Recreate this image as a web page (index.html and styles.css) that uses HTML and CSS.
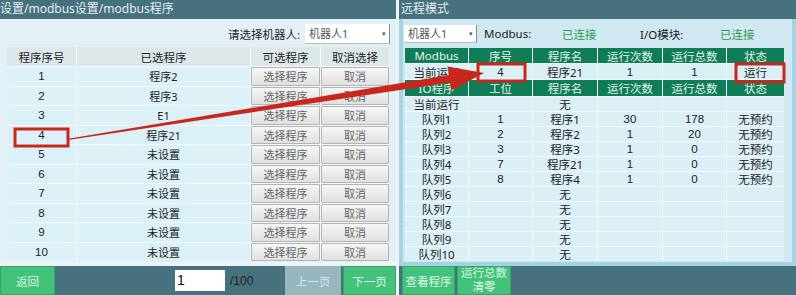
FILE: index.html
```html
<!DOCTYPE html>
<html lang="zh">
<head>
<meta charset="utf-8">
<link rel="stylesheet" href="styles.css">
</head>
<body>
<div class="screen">
  <section class="panel left">
    <div class="title">设置/modbus设置/modbus程序</div>
    <div class="lbody">
      <div class="robot-row">
        <span class="label">请选择机器人:</span>
        <div class="select wide"><span>机器人1</span><span class="caret">▾</span></div>
      </div>
      <div class="ltable">
        <div class="lh">程序序号</div><div class="lh">已选程序</div><div class="lh">可选程序</div><div class="lh">取消选择</div>
        <div class="lc num">1</div><div class="lc">程序2</div><div class="lb"><button>选择程序</button></div><div class="lb"><button>取消</button></div>
        <div class="lc num">2</div><div class="lc">程序3</div><div class="lb"><button>选择程序</button></div><div class="lb"><button>取消</button></div>
        <div class="lc num">3</div><div class="lc">E1</div><div class="lb"><button>选择程序</button></div><div class="lb"><button>取消</button></div>
        <div class="lc num">4</div><div class="lc">程序21</div><div class="lb"><button>选择程序</button></div><div class="lb"><button>取消</button></div>
        <div class="lc num">5</div><div class="lc">未设置</div><div class="lb"><button>选择程序</button></div><div class="lb"><button>取消</button></div>
        <div class="lc num">6</div><div class="lc">未设置</div><div class="lb"><button>选择程序</button></div><div class="lb"><button>取消</button></div>
        <div class="lc num">7</div><div class="lc">未设置</div><div class="lb"><button>选择程序</button></div><div class="lb"><button>取消</button></div>
        <div class="lc num">8</div><div class="lc">未设置</div><div class="lb"><button>选择程序</button></div><div class="lb"><button>取消</button></div>
        <div class="lc num">9</div><div class="lc">未设置</div><div class="lb"><button>选择程序</button></div><div class="lb"><button>取消</button></div>
        <div class="lc num">10</div><div class="lc">未设置</div><div class="lb"><button>选择程序</button></div><div class="lb"><button>取消</button></div>
      </div>
    </div>
    <div class="footer">
      <div class="btn green back">返回</div>
      <div class="page-input">1</div>
      <span class="total">/100</span>
      <div class="btn grey prev">上一页</div>
      <div class="btn green next">下一页</div>
    </div>
  </section>

  <section class="panel right">
    <div class="title">远程模式</div>
    <div class="rbody">
      <div class="status-row">
        <div class="select narrow"><span>机器人1</span><span class="caret">▾</span></div>
        <span class="st-label mod">Modbus:</span>
        <span class="ok ok1">已连接</span>
        <span class="st-label io">I/O模块:</span>
        <span class="ok">已连接</span>
      </div>
      <div class="rtable">
        <div class="rh">Modbus</div><div class="rh">序号</div><div class="rh">程序名</div><div class="rh">运行次数</div><div class="rh">运行总数</div><div class="rh">状态</div>
        <div class="rc">当前运行</div><div class="rc num">4</div><div class="rc">程序21</div><div class="rc num">1</div><div class="rc num">1</div><div class="rc">运行</div>
        <div class="rh">IO程序</div><div class="rh">工位</div><div class="rh">程序名</div><div class="rh">运行次数</div><div class="rh">运行总数</div><div class="rh">状态</div>
        <div class="rc">当前运行</div><div class="rc"></div><div class="rc">无</div><div class="rc"></div><div class="rc"></div><div class="rc"></div>
        <div class="rc">队列1</div><div class="rc num">1</div><div class="rc">程序1</div><div class="rc num">30</div><div class="rc num">178</div><div class="rc">无预约</div>
        <div class="rc">队列2</div><div class="rc num">2</div><div class="rc">程序2</div><div class="rc num">1</div><div class="rc num">20</div><div class="rc">无预约</div>
        <div class="rc">队列3</div><div class="rc num">3</div><div class="rc">程序3</div><div class="rc num">1</div><div class="rc num">0</div><div class="rc">无预约</div>
        <div class="rc">队列4</div><div class="rc num">7</div><div class="rc">程序21</div><div class="rc num">1</div><div class="rc num">0</div><div class="rc">无预约</div>
        <div class="rc">队列5</div><div class="rc num">8</div><div class="rc">程序4</div><div class="rc num">1</div><div class="rc num">0</div><div class="rc">无预约</div>
        <div class="rc">队列6</div><div class="rc"></div><div class="rc">无</div><div class="rc"></div><div class="rc"></div><div class="rc"></div>
        <div class="rc">队列7</div><div class="rc"></div><div class="rc">无</div><div class="rc"></div><div class="rc"></div><div class="rc"></div>
        <div class="rc">队列8</div><div class="rc"></div><div class="rc">无</div><div class="rc"></div><div class="rc"></div><div class="rc"></div>
        <div class="rc">队列9</div><div class="rc"></div><div class="rc">无</div><div class="rc"></div><div class="rc"></div><div class="rc"></div>
        <div class="rc">队列10</div><div class="rc"></div><div class="rc">无</div><div class="rc"></div><div class="rc"></div><div class="rc"></div>
      </div>
    </div>
    <div class="footer">
      <div class="btn green view">查看程序</div>
      <div class="btn green clear"><span>运行总数</span><span>清零</span></div>
    </div>
  </section>

  <svg class="annot" width="796" height="295" viewBox="0 0 796 295">
    <polygon points="68,140 68.3,138.8 448.9,75 447.5,66.6 484,73 451.3,90.4 449.9,82.5" fill="#c9271c"/>
    <rect x="15" y="129" width="53" height="17" fill="none" stroke="#c9271c" stroke-width="3"/>
    <rect x="478" y="64" width="47" height="17" fill="none" stroke="#c9271c" stroke-width="3"/>
    <rect x="736" y="64" width="48" height="18" fill="none" stroke="#c9271c" stroke-width="3"/>
  </svg>
</div>
</body>
</html>
```

FILE: styles.css
```css
* { box-sizing: border-box; }
html, body { margin: 0; padding: 0; }
body {
  width: 796px;
  height: 295px;
  overflow: hidden;
  background: #eef4f6;
  font-family: "Noto Sans", "Noto Sans CJK SC", sans-serif;
  font-size: 11px;
  color: #222;
}
.screen {
  position: relative;
  display: flex;
  gap: 3px;
  width: 796px;
  height: 295px;
}
.panel {
  display: flex;
  flex-direction: column;
  height: 295px;
}
.panel.left { width: 396px; }
.panel.right { width: 397px; }
.title {
  height: 19px;
  line-height: 18px;
  background: #46717f;
  color: #e6eef0;
  font-size: 12px;
  padding-left: 0;
  white-space: nowrap;
  overflow: hidden;
}
.panel.right .title { padding-left: 2px; }

/* left body */
.lbody {
  flex: 1;
  background: #e3f1f6;
  display: flex;
  flex-direction: column;
}
.robot-row {
  height: 28px;
  display: flex;
  align-items: center;
  justify-content: flex-end;
  padding-right: 6px;
  gap: 5px;
  padding-top: 1px;
}
.label { color: #222; font-size: 11.5px; }
.select {
  position: relative;
  background: #fff;
  color: #555;
  border-right: 1px solid #8a8a8a;
  border-bottom: 1px solid #bbb;
  display: flex;
  align-items: center;
  padding-left: 4px;
}
.select.wide { width: 85px; height: 20px; }
.select.narrow { width: 73px; height: 18px; }
.caret {
  position: absolute;
  right: 3px;
  top: 50%;
  transform: translateY(-50%) scale(0.7);
  color: #555;
  font-size: 10px;
}
.ltable {
  margin-left: 7px;
  width: 382px;
  display: grid;
  grid-template-columns: 69px 173px 69px 68px;
  grid-template-rows: 19px;
  grid-auto-rows: 18.5px;
  gap: 1px;
  background: #f4fafc;
}
.lh, .lc, .rh, .rc {
  display: flex;
  align-items: center;
  justify-content: center;
  white-space: nowrap;
}
.lh { background: #dde7ea; color: #222; font-size: 11.5px; }
.lc { background: #dcf0f7; color: #222; }
.num { font-family: "Liberation Sans", "Noto Sans CJK SC", sans-serif; font-size: 11.5px; }
.lb { background: #dcf0f7; display: flex; }
.lb button {
  flex: 1;
  margin: 0;
  border: 1px solid #b4b4b4;
  border-radius: 1px;
  background: linear-gradient(#f6f6f6, #e0e0e0);
  color: #666;
  font-family: "Noto Sans", "Noto Sans CJK SC", sans-serif;
  font-size: 11px;
  padding: 0;
}

/* footers */
.footer {
  height: 29px;
  background: #46717f;
  display: flex;
  align-items: center;
}
.panel.left .footer { margin-top: 4px; }
.btn {
  height: 29px;
  display: flex;
  align-items: center;
  justify-content: center;
  text-align: center;
  font-size: 11.5px;
}
.btn.green {
  background: #42c27b;
  color: #dff7e8;
  border: 1px solid #33a866;
}
.btn.grey { background: #97b7bf; color: #d8e6e9; }
.back { width: 55px; }
.page-input {
  margin-left: 120px;
  width: 50px;
  height: 21px;
  background: #fff;
  color: #111;
  font-family: "Liberation Sans", sans-serif;
  font-size: 14px;
  padding-left: 2px;
  line-height: 21px;
}
.total {
  margin-left: 5px;
  width: 55px;
  font-family: "Liberation Sans", sans-serif;
  color: #222;
  font-size: 12px;
}
.prev { width: 56px; margin-right: 2px; }
.next { width: 53px; }

/* right body */
.rbody {
  flex: 1;
  background: #cfe8f1;
  display: flex;
  flex-direction: column;
  border-left: 4px solid #a6d3e3;
  border-right: 4px solid #a6d3e3;
  border-bottom: 4px solid #a6d3e3;
}
.status-row {
  height: 29px;
  display: flex;
  align-items: center;
  padding-left: 1px;
}
.st-label { color: #222; font-size: 11.5px; }
.mod { margin-left: 7px; width: 78px; }
.io { width: 80px; }
.ok { color: #2d9d4b; font-size: 11.5px; }
.ok1 { width: 78px; }
.rtable {
  margin-left: 2px;
  width: 379px;
  display: grid;
  grid-template-columns: 63px 63px 64px 64px 63px 57px;
  grid-template-rows: 15px 15px 16px;
  grid-auto-rows: 14px;
  gap: 1px;
  background: #f4fafc;
}
.rh { background: #0f7e56; color: #e4f3ec; font-size: 11.5px; }
.rc { background: #daeff6; color: #222; font-size: 11.5px; }

.view { width: 53px; margin-left: 3px; }
.clear {
  width: 54px;
  margin-left: 2px;
  flex-direction: column;
  justify-content: flex-start;
  padding-top: 0;
  overflow: hidden;
  font-family: "Liberation Sans", "Noto Sans CJK SC", sans-serif;
}
.clear span { display: block; height: 13.5px; line-height: 13.5px; }

.annot {
  position: absolute;
  left: 0;
  top: 0;
  pointer-events: none;
}
```
